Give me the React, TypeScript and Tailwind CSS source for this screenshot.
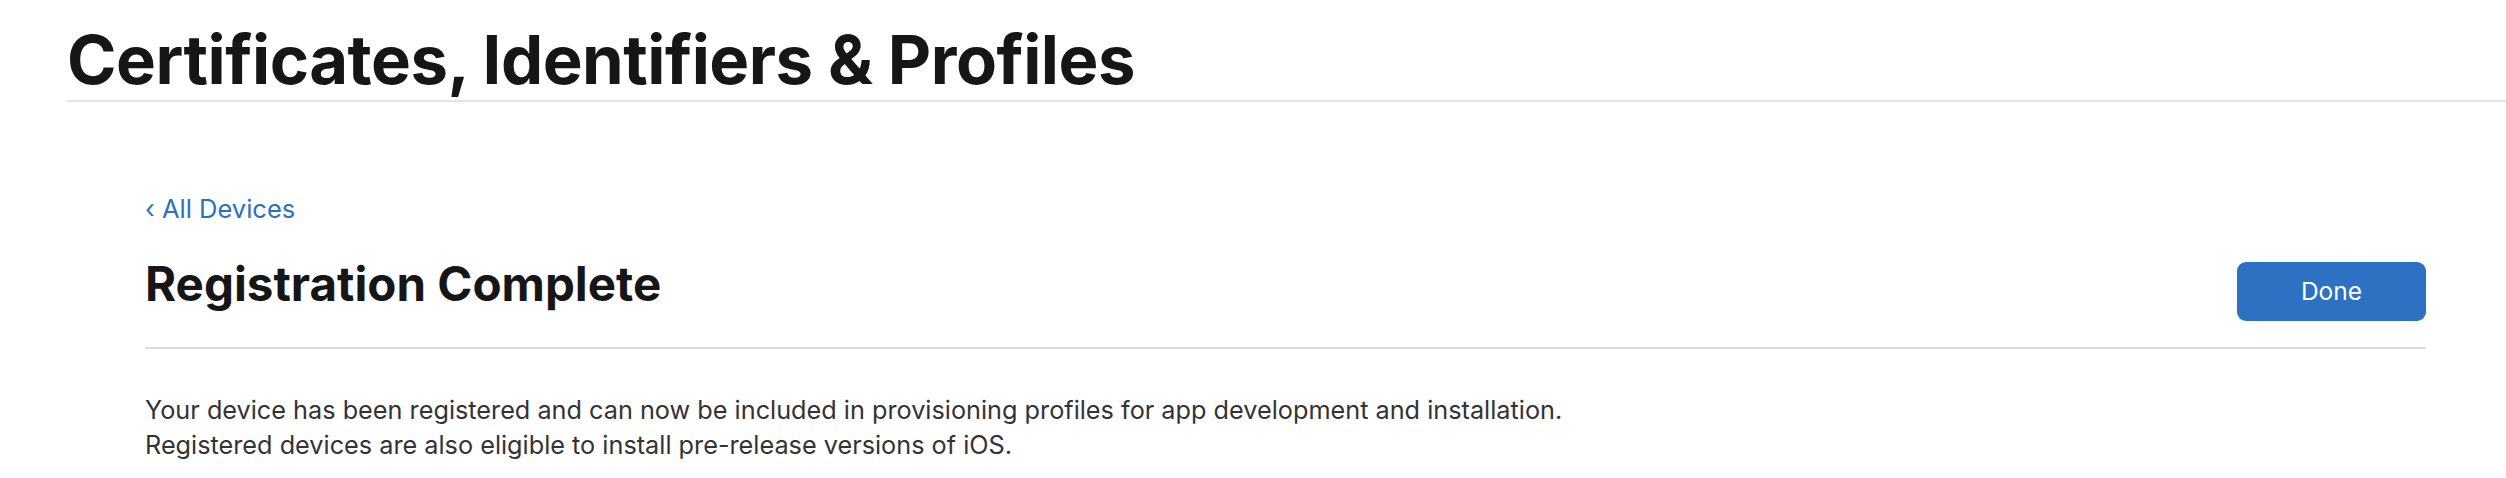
export default function App() {
  return (
    <div className="min-h-[478px] w-full bg-white font-['Inter','Liberation_Sans',sans-serif] text-[#161617]">
      {/* page header */}
      <div className="ml-[67px] border-b-2 border-[#e4e4e4] pt-[26px] pb-[7px]">
        <h1 className="text-[67px] font-bold leading-none tracking-[-0.5px]">
          Certificates, Identifiers &amp; Profiles
        </h1>
      </div>

      <div className="pl-[145px] pr-[80px]">
        <a href="#" className="mt-[89px] block text-[25.5px] leading-[35px] text-[#2c6fc4]">
          ‹ All Devices
        </a>

        <div className="mt-[36px] flex items-start justify-between border-b-2 border-[#dcdcdc] pb-[26px]">
          <h2 className="-mt-[2px] text-[47.5px] font-bold leading-none">Registration Complete</h2>
          <button className="h-[59px] w-[189px] rounded-[9px] bg-[#2d71c3] text-[24.5px] text-white">
            Done
          </button>
        </div>

        <div className="mt-[44px] text-[25.25px] leading-[35px] text-[#333336]">
          <p>
            Your device has been registered and can now be included in provisioning profiles for app
            development and installation.
          </p>
          <p>Registered devices are also eligible to install pre-release versions of iOS.</p>
        </div>
      </div>
    </div>
  );
}
